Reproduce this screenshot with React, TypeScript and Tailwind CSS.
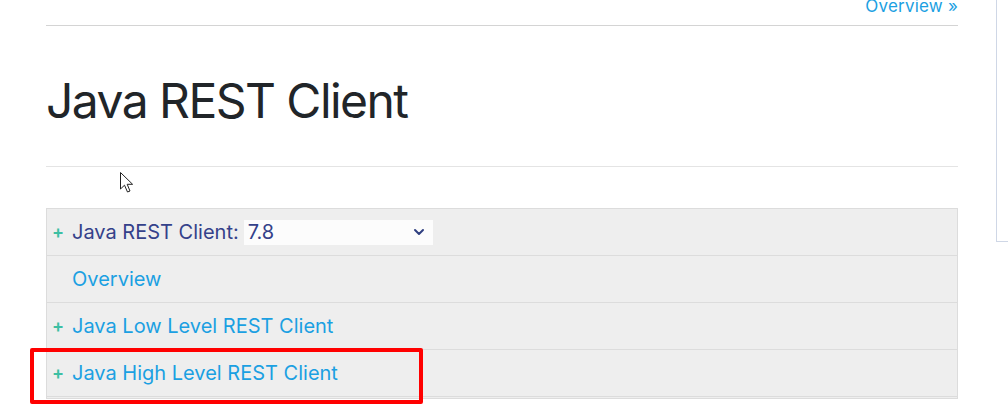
import { ChevronDown } from 'lucide-react'

const rows = [
  { plus: true, label: 'Java Low Level REST Client' },
  { plus: true, label: 'Java High Level REST Client' },
]

function Plus() {
  return <span className="w-[20px] text-[18px] font-semibold text-[#3dbfa3] leading-none">+</span>
}

function Cursor() {
  return (
    <svg
      className="absolute left-[119px] top-[171px]"
      width="18"
      height="24"
      viewBox="0 0 18 24"
    >
      <path
        d="M1.5 1.5 L1.5 18 L5.5 14.2 L8.5 21 L11 20 L8.2 13.3 L13.6 13.3 Z"
        fill="#fff"
        stroke="#222"
        strokeWidth="1"
        strokeLinejoin="round"
      />
    </svg>
  )
}

export default function App() {
  return (
    <div
      className="relative flex w-[1008px] h-[419px] bg-white overflow-hidden"
      style={{ fontFamily: 'Inter, "Noto Sans", sans-serif' }}
    >
      <div className="pl-[46px] w-[958px] shrink-0">
        <div className="flex justify-end items-start h-[26px] border-b border-[#d4d4d4]">
          <a className="mt-[-5px] text-[17px] leading-[22px] text-[#1ba0e2] tracking-[0.2px]">Overview »</a>
        </div>
        <h1 className="mt-[47px] text-[48px] leading-[56px] text-[#212529] tracking-[-1.55px]">
          Java REST Client
        </h1>
        <div className="mt-[37px] border-t border-[#e4e4e4]" />
        <div className="mt-[41px] border border-[#dcdcdc] bg-[#eeeeee] text-[20px]">
          <div className="flex items-center h-[47px] pl-[5px] border-b border-[#dcdcdc]">
            <Plus />
            <span className="text-[#34418a]">Java REST Client:</span>
            <div className="ml-[5px] flex items-center justify-between w-[189px] h-[25px] bg-[#fcfcfc] pl-[4px] pr-[6px] text-[#34418a]">
              <span>7.8</span>
              <ChevronDown size={16} strokeWidth={3} className="text-[#2f3f80]" />
            </div>
          </div>
          <div className="flex items-center h-[47px] pl-[25px] border-b border-[#dcdcdc]">
            <span className="text-[#1ba0e2]">Overview</span>
          </div>
          {rows.map((r) => (
            <div
              key={r.label}
              className="flex items-center h-[47px] pl-[5px] border-b border-[#dcdcdc]"
            >
              <Plus />
              <span className="text-[#1ba0e2]">{r.label}</span>
            </div>
          ))}
          <div className="h-[1px]" />
        </div>
      </div>
      <div className="ml-[38px] w-[12px] h-[242px] border-l border-b border-[#cfd7e6]" />
      <Cursor />
      <div className="absolute left-[30px] top-[348px] w-[393px] h-[56px] border-[4px] border-[#ff0000] rounded-[2px]" />
    </div>
  )
}
